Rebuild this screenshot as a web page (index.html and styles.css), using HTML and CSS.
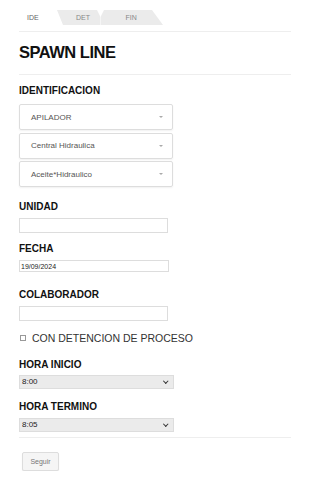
FILE: index.html
```html
<!DOCTYPE HTML>
<html>
<head>
  <meta charset="UTF-8">
  <title>Spawn Line</title>
  <meta name="viewport" content="width=device-width, initial-scale=1">
  <link rel="stylesheet" href="styles.css">
</head>
<body>
  <div class="page">
    <div class="steps">
      <span class="step step-ide">IDE</span>
      <span class="step step-det">DET</span>
      <span class="step step-fin">FIN</span>
    </div>

    <h1 class="title">SPAWN LINE</h1>

    <form class="form" onsubmit="return false;">
      <div class="group group-ident">
        <label class="label">IDENTIFICACION</label>
        <div class="dropdown"><span>APILADOR</span><i class="caret"></i></div>
        <div class="dropdown"><span>Central Hidraulica</span><i class="caret"></i></div>
        <div class="dropdown"><span>Aceite*Hidraulico</span><i class="caret"></i></div>
      </div>

      <div class="group group-unidad">
        <label class="label" for="unidad">UNIDAD</label>
        <input class="text-input" type="text" id="unidad">
      </div>

      <div class="group group-fecha">
        <label class="label" for="fecha">FECHA</label>
        <input class="date-input" type="text" id="fecha" value="19/09/2024">
      </div>

      <div class="group group-colab">
        <label class="label" for="colaborador">COLABORADOR</label>
        <input class="text-input" type="text" id="colaborador">
      </div>

      <label class="check-row">
        <input class="check" type="checkbox">
        <span>CON DETENCION DE PROCESO</span>
      </label>

      <div class="group group-inicio">
        <label class="label" for="inicio">HORA INICIO</label>
        <div class="select-wrap">
          <select class="select" id="inicio">
            <option>8:00</option>
            <option>8:05</option>
          </select>
        </div>
      </div>

      <div class="group group-termino">
        <label class="label" for="termino">HORA TERMINO</label>
        <div class="select-wrap">
          <select class="select" id="termino">
            <option>8:05</option>
            <option>8:10</option>
          </select>
        </div>
      </div>

      <div class="actions">
        <button class="btn" type="button">Seguir</button>
      </div>
    </form>
  </div>
</body>
</html>
```

FILE: styles.css
```css
body {
  margin: 0;
  font-family: 'Liberation Sans', Arial, sans-serif;
  color: #111;
  background: #fff;
}

.page {
  margin: 0 19px;
  padding-top: 10px;
}

.steps {
  display: flex;
  height: 15px;
  padding-bottom: 6px;
  border-bottom: 1px solid #eee;
  font-size: 7px;
  line-height: 15px;
  color: #888;
}

.step {
  display: block;
  height: 15px;
}

.step-ide {
  width: 30px;
  padding-left: 8px;
  color: #666;
}

.step-det {
  width: 24.5px;
  padding-left: 19px;
  background: #ebebeb;
  clip-path: polygon(0 0, 40px 0, 43.5px 7px, 43.5px 100%, 6px 100%);
}

.step-fin {
  width: 37.5px;
  padding-left: 25px;
  background: #ebebeb;
  clip-path: polygon(0 7px, 3.5px 0, 51.5px 0, 62.5px 100%, 0 100%);
}

.title {
  margin: 12px 0 0 0;
  padding-bottom: 14px;
  border-bottom: 1px solid #eee;
  font-size: 16.5px;
  line-height: 16px;
  letter-spacing: -0.5px;
  font-weight: bold;
}

.label {
  display: block;
  font-size: 10px;
  line-height: 12px;
  font-weight: bold;
  margin-bottom: 5px;
}

.group-ident { margin-top: 10px; }
.group-ident .label { margin-bottom: 7px; }
.group-unidad { margin-top: 14px; }
.group-fecha { margin-top: 10px; }
.group-colab { margin-top: 17px; }
.group-inicio { margin-top: 14px; }
.group-inicio .label { margin-bottom: 4px; }
.group-termino { margin-top: 12px; }

.dropdown {
  box-sizing: border-box;
  width: 154px;
  height: 26px;
  margin-bottom: 2.5px;
  padding: 0 9px 0 11px;
  display: flex;
  align-items: center;
  justify-content: space-between;
  border: 1px solid #ddd;
  border-radius: 2px;
  box-shadow: 0 1px 2px rgba(0,0,0,0.06);
  font-size: 8px;
  color: #555;
}

.caret {
  width: 0;
  height: 0;
  border-left: 2px solid transparent;
  border-right: 2px solid transparent;
  border-top: 2.5px solid #aaa;
}

.text-input {
  display: block;
  box-sizing: border-box;
  width: 149px;
  height: 15px;
  margin: 0;
  border: 1px solid #ddd;
  padding: 0 2px;
  font-size: 8px;
  font-family: inherit;
}

.date-input {
  display: block;
  box-sizing: border-box;
  width: 150px;
  height: 12px;
  margin: 0;
  border: 1px solid #ddd;
  padding: 0 1px;
  font-size: 7px;
  font-family: inherit;
  color: #222;
}

.check-row {
  display: flex;
  align-items: center;
  margin-top: 10.5px;
  height: 13px;
  font-size: 10.5px;
  color: #333;
}

.check {
  appearance: none;
  -webkit-appearance: none;
  box-sizing: border-box;
  width: 6px;
  height: 6px;
  margin: 0 6px 0 1px;
  border: 1px solid #999;
  background: #fff;
}

.select-wrap {
  position: relative;
  width: 155px;
}

.select-wrap::after {
  content: '';
  position: absolute;
  right: 7px;
  top: 4px;
  width: 2.5px;
  height: 2.5px;
  border-right: 1.2px solid #333;
  border-bottom: 1.2px solid #333;
  transform: rotate(45deg);
  pointer-events: none;
}

.select {
  appearance: none;
  -webkit-appearance: none;
  display: block;
  box-sizing: border-box;
  width: 155px;
  height: 14px;
  margin: 0;
  padding: 0 2px;
  border: 1px solid #ddd;
  border-radius: 0;
  background: #ebebeb;
  font-size: 8px;
  font-family: inherit;
  color: #222;
}

.actions {
  margin-top: 5px;
  padding-top: 12px;
  border-top: 1px solid #eee;
}

.btn {
  box-sizing: border-box;
  width: 37px;
  height: 19px;
  margin-left: 3px;
  padding: 0;
  border: 1px solid #ddd;
  border-radius: 2px;
  background: #f5f5f5;
  box-shadow: 0 1px 1px rgba(0,0,0,0.08);
  font-family: inherit;
  font-size: 7px;
  color: #777;
}
```
